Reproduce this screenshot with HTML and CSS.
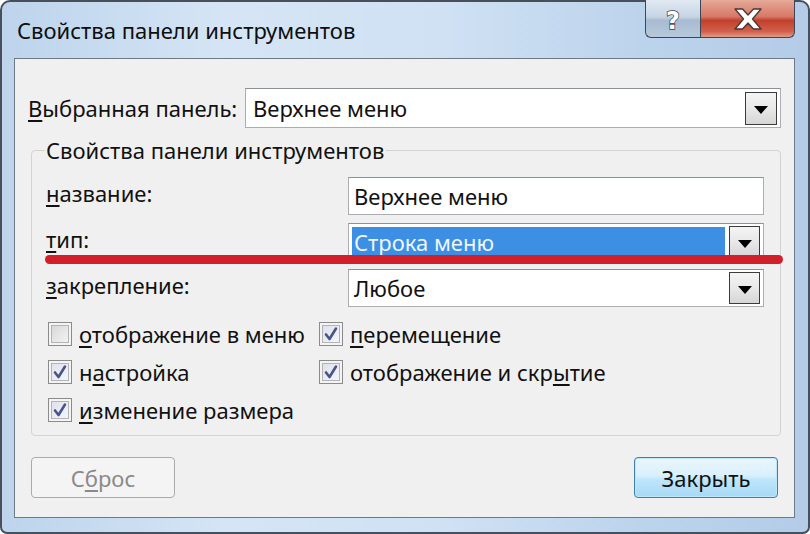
FILE: index.html
```html
<!DOCTYPE html>
<html lang="ru">
<head>
<meta charset="utf-8">
<title>Свойства панели инструментов</title>
<link rel="stylesheet" href="styles.css">
</head>
<body>
<div class="window">
  <div class="titlebar">
    <div class="title">Свойства панели инструментов</div>
    <div class="caption-buttons">
      <div class="cbtn help">
        <svg width="26" height="32" viewBox="0 0 26 32"><text x="13" y="26" text-anchor="middle" class="qmark">?</text></svg>
      </div>
      <div class="cbtn close">
        <svg width="34" height="24" viewBox="0 0 34 24"><path d="M4 2 H11.5 L17 8 L22.5 2 H30 L21.5 12 L30 22 H22.5 L17 16 L11.5 22 H4 L12.5 12 Z" fill="#fff" stroke="#4a3535" stroke-width="1.3" stroke-linejoin="round"/></svg>
      </div>
    </div>
  </div>
  <div class="client">
    <div class="row-top">
      <span class="lbl-top"><u>В</u>ыбранная панель:</span>
      <div class="combo wide"><span class="val">Верхнее меню</span><span class="drop"><span class="arrow"></span></span></div>
    </div>
    <fieldset class="group">
      <legend>Свойства панели инструментов</legend>
      <div class="field"><span class="lbl"><u>н</u>азвание:</span><div class="input">Верхнее меню</div></div>
      <div class="field"><span class="lbl"><u>т</u>ип:</span><div class="combo"><span class="val sel">Строка меню</span><span class="drop"><span class="arrow"></span></span></div></div>
      <div class="field"><span class="lbl"><u>з</u>акрепление:</span><div class="combo"><span class="val">Любое</span><span class="drop"><span class="arrow"></span></span></div></div>
      <div class="checks">
        <div class="chk"><span class="box"></span><span><u>о</u>тображение в меню</span></div>
        <div class="chk"><span class="box on"><svg width="16" height="16" viewBox="0 0 16 16"><path d="M3 8.5 L6.5 13 L13 2.5" fill="none" stroke="#4a5486" stroke-width="2.6" stroke-linecap="round" stroke-linejoin="round"/></svg></span><span><u>п</u>еремещение</span></div>
        <div class="chk"><span class="box on"><svg width="16" height="16" viewBox="0 0 16 16"><path d="M3 8.5 L6.5 13 L13 2.5" fill="none" stroke="#4a5486" stroke-width="2.6" stroke-linecap="round" stroke-linejoin="round"/></svg></span><span>н<u>а</u>стройка</span></div>
        <div class="chk"><span class="box on"><svg width="16" height="16" viewBox="0 0 16 16"><path d="M3 8.5 L6.5 13 L13 2.5" fill="none" stroke="#4a5486" stroke-width="2.6" stroke-linecap="round" stroke-linejoin="round"/></svg></span><span>отображение и скр<u>ы</u>тие</span></div>
        <div class="chk"><span class="box on"><svg width="16" height="16" viewBox="0 0 16 16"><path d="M3 8.5 L6.5 13 L13 2.5" fill="none" stroke="#4a5486" stroke-width="2.6" stroke-linecap="round" stroke-linejoin="round"/></svg></span><span><u>и</u>зменение размера</span></div>
      </div>
    </fieldset>
    <div class="buttons">
      <div class="btn disabled">С<u>б</u>рос</div>
      <div class="btn default">Закрыть</div>
    </div>
  </div>
  <div class="annot-line"></div>
</div>
</body>
</html>
```
FILE: styles.css
```css
html, body {
  margin: 0;
  padding: 0;
  background: #ffffff;
}
body {
  font-family: "Noto Sans", "Open Sans", sans-serif;
  font-size: 22px;
  color: #111;
}
.window {
  position: relative;
  box-sizing: border-box;
  width: 810px;
  height: 534px;
  border: 2px solid #46505c;
  border-radius: 10px 10px 7px 7px;
  background: linear-gradient(to right, #bdd4ec 0%, #d5e5f5 28%, #cfe1f3 55%, #bcd3ec 80%, #b4cce8 100%);
  padding: 0 13px 14px 12px;
  display: flex;
  flex-direction: column;
}
.titlebar {
  height: 56px;
  display: flex;
  align-items: flex-start;
  flex-shrink: 0;
}
.title {
  margin-top: 13px;
  padding-left: 3px;
  line-height: 30px;
  color: #0e0e0e;
}
.caption-buttons {
  margin-left: auto;
  margin-top: -2px;
  display: flex;
}
.cbtn {
  box-sizing: border-box;
  height: 38px;
  border: 1px solid #3d4652;
  border-top: none;
  display: flex;
  align-items: center;
  justify-content: center;
}
.help {
  width: 55px;
  border-radius: 0 0 0 6px;
  border-right: none;
  background: linear-gradient(to bottom, #e0e9f3 0%, #c8d5e4 45%, #a9bbd0 55%, #b6c8dc 100%);
}
.close {
  width: 95px;
  border-radius: 0 0 6px 0;
  background: linear-gradient(to bottom, #e6a999 0%, #d77866 45%, #c2402c 55%, #d0614c 85%, #e19b83 100%);
}
.qmark {
  font-family: "DejaVu Sans", sans-serif;
  font-weight: bold;
  font-size: 24px;
  fill: #fff;
  stroke: #3a3f48;
  stroke-width: 1.4px;
  paint-order: stroke;
}
.client {
  flex: 1;
  border: 1px solid #6d7987;
  background: #f0f0f0;
  padding: 0 13px;
  display: flex;
  flex-direction: column;
}
u {
  text-decoration-thickness: 2px;
  text-underline-offset: 3px;
}
.row-top {
  margin-top: 29px;
  display: flex;
  align-items: center;
  height: 40px;
}
.lbl-top {
  width: 217px;
  flex-shrink: 0;
  line-height: 30px;
}
.combo, .input {
  box-sizing: border-box;
  position: relative;
  display: flex;
  align-items: center;
  background: #fff;
  border: 1px solid #a9adb4;
  border-top-color: #8c9097;
}
.combo.wide {
  width: 536px;
  height: 40px;
}
.val {
  flex: 1;
  padding-left: 5px;
  line-height: 30px;
}
.combo.wide .val {
  padding-left: 7px;
}
.val.sel {
  background: #3c8fe2;
  color: #eef6ff;
  margin: 2px 0 2px 3px;
  padding-left: 2px;
  line-height: 30px;
}
.drop {
  box-sizing: border-box;
  width: 32px;
  height: 33px;
  margin: 0 3px 0 4px;
  border: 1px solid #3b3b3b;
  background: linear-gradient(to bottom, #f4f4f4 0%, #e8e8e8 50%, #d6d6d6 100%);
  display: flex;
  align-items: center;
  justify-content: center;
}
.arrow {
  width: 0;
  height: 0;
  border-left: 7px solid transparent;
  border-right: 7px solid transparent;
  border-top: 8px solid #000;
  margin-top: 3px;
}
.group {
  margin: 7px 0 0 3px;
  padding: 12px 10px 6px 13px;
  border: 1px solid #d3d3d3;
  border-radius: 4px;
  min-width: 0;
}
.group legend {
  padding: 0 2px 0 1px;
  line-height: 30px;
}
.field {
  display: flex;
  align-items: center;
  height: 38px;
  margin-bottom: 8px;
}
.field .lbl {
  width: 302px;
  flex-shrink: 0;
  line-height: 30px;
  padding-left: 1px;
  margin-top: -6px;
}
.field .input, .field .combo {
  width: 416px;
  height: 38px;
}
.field .input {
  padding-left: 5px;
  line-height: 30px;
}
.field .drop {
  width: 31px;
  height: 32px;
  margin-right: 3px;
}
.checks {
  margin-top: 7px;
  display: grid;
  grid-template-columns: 271px 1fr;
  grid-auto-rows: 38px;
}
.chk {
  display: flex;
  align-items: center;
  padding-left: 3px;
  line-height: 30px;
}
.box {
  box-sizing: border-box;
  width: 24px;
  height: 24px;
  margin-right: 7px;
  border: 1px solid #8b8b8b;
  background: linear-gradient(135deg, #d3d3d3 0%, #e9e9e9 60%, #f6f6f6 100%);
  box-shadow: inset 0 0 0 2px #f4f4f4, inset 0 0 0 3px #b4b4b4;
  display: flex;
  align-items: center;
  justify-content: center;
  flex-shrink: 0;
}
.box.on {
  background: linear-gradient(135deg, #dcdde8 0%, #eceff6 60%, #f7f7fb 100%);
}
.buttons {
  margin-top: 21px;
  display: flex;
  justify-content: space-between;
  padding: 0 3px;
}
.btn {
  box-sizing: border-box;
  width: 144px;
  height: 41px;
  border-radius: 4px;
  display: flex;
  align-items: center;
  justify-content: center;
  line-height: 30px;
}
.btn.disabled {
  border: 1px solid #ababab;
  background: #f4f4f4;
  color: #8a8a8a;
}
.btn.default {
  border: 1px solid #3c7fb1;
  background: linear-gradient(to bottom, #eaf6fd 0%, #d9f0fc 45%, #bee6fd 55%, #a7d9f5 100%);
  box-shadow: inset 0 0 0 1px #bfe7fb;
  color: #111;
}
.annot-line {
  position: absolute;
  left: 43px;
  top: 253px;
  width: 738px;
  height: 9px;
  border-radius: 5px;
  background: #d21f2c;
}
```
